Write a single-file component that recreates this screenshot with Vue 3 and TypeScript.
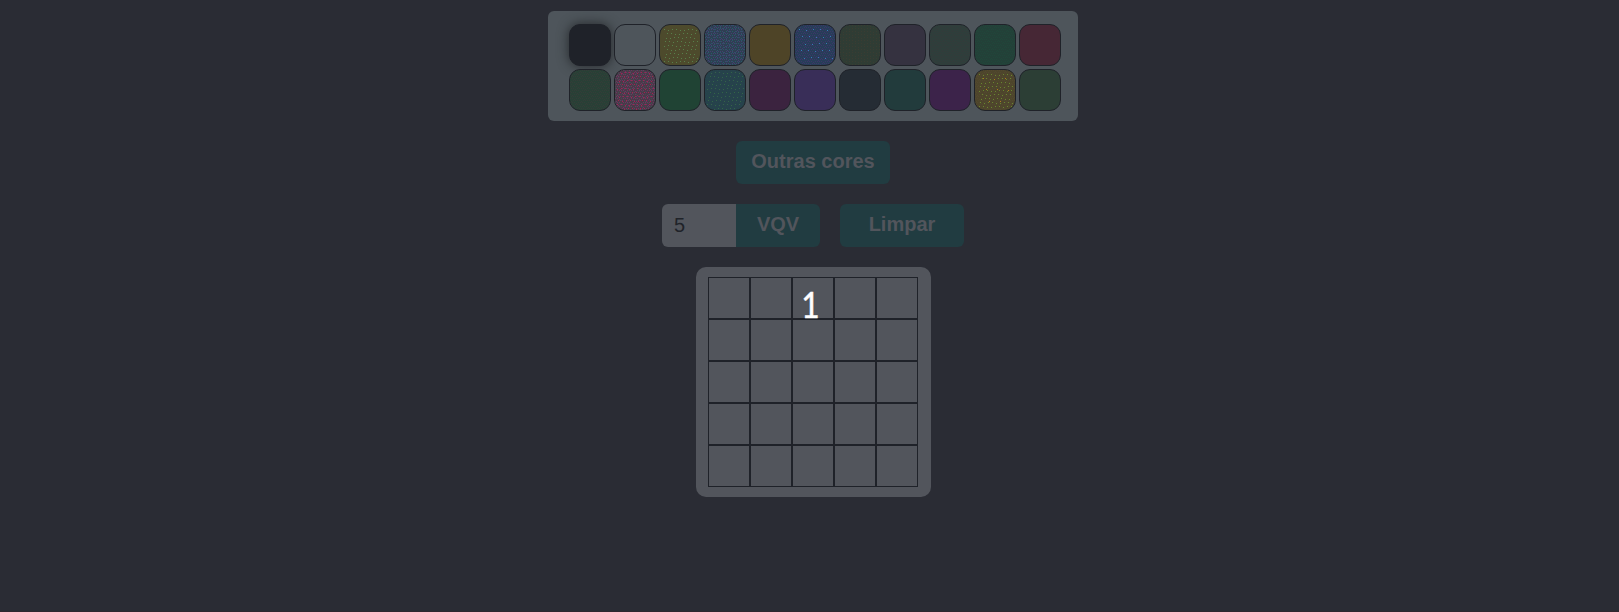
<script setup lang="ts">
import { ref } from 'vue'

interface Grain {
  color: string
  // average distance between grains
  step: number
  // empty margin inside the swatch
  inset: number
}

interface Swatch {
  color: string
  grains?: Grain[]
}

const fine = (color: string, step = 2): Grain => ({ color, step, inset: 0 })
const dots = (color: string, step = 4, inset = 4): Grain => ({ color, step, inset })

const swatches: Swatch[] = [
  { color: '#1f2229' },
  { color: '#4e555b' },
  { color: '#4d4a2c', grains: [dots('#57804a')] },
  { color: '#2d4052', grains: [fine('#444070'), fine('#285a68', 3)] },
  { color: '#4e4427' },
  { color: '#263e58', grains: [fine('#3d3568'), dots('#367ab8', 7)] },
  { color: '#2f3c34', grains: [fine('#3a3c32', 3)] },
  { color: '#353240' },
  { color: '#2e3e3b', grains: [fine('#343a3a')] },
  { color: '#234038', grains: [fine('#20463a')] },
  { color: '#462735' },
  { color: '#284036', grains: [fine('#343c38')] },
  { color: '#4b3948', grains: [fine('#6a3862'), fine('#3d4e52', 3), dots('#a81f50', 4, 2)] },
  { color: '#204334' },
  { color: '#25434a', grains: [fine('#29404f'), dots('#336448', 4, 2)] },
  { color: '#3b233f' },
  { color: '#392e58' },
  { color: '#252c34' },
  { color: '#223b3c' },
  { color: '#3c234a' },
  { color: '#4d452b', grains: [fine('#52482f'), dots('#67862f'), dots('#b07a1c', 11, 8)] },
  { color: '#2c3e35' },
]

// One-pixel squares on a skewed lattice, as in an ordered dither
function grainPath({ step, inset }: Grain): string {
  let d = ''
  let row = 0
  for (let y = inset; y < 40 - inset / 2; y += step, row++) {
    let col = 0
    for (let x = inset + ((row * 3) % step); x < 40 - inset / 2; x += step, col++) {
      const jitter = step > 3 ? (col * 5 + row * 3) % 7 > 3 ? 1 : 0 : (col * 3 + row) % 5 === 0 ? 1 : 0
      d += `M${x} ${Math.min(39, y + jitter)}h1v1h-1z`
    }
  }
  return d
}

const size = ref(5)
const selected = ref(0)
</script>

<template>
  <main class="page">
    <section class="palette">
      <button
        v-for="(s, i) in swatches"
        :key="i"
        class="swatch"
        :class="{ selected: selected === i }"
        :style="{ backgroundColor: s.color }"
        @click="selected = i"
      >
        <svg v-if="s.grains" class="grain" viewBox="0 0 40 40" shape-rendering="crispEdges">
          <path v-for="(g, k) in s.grains" :key="k" :d="grainPath(g)" :fill="g.color" />
        </svg>
      </button>
    </section>
    <button class="btn more">Outras cores</button>
    <div class="controls">
      <input v-model="size" class="size" type="text" />
      <button class="btn apply">VQV</button>
      <button class="btn clear">Limpar</button>
    </div>
    <section class="board">
      <div class="grid">
        <div v-for="n in 25" :key="n" class="cell"></div>
      </div>
      <span class="count">1</span>
    </section>
  </main>
</template>

<style>
body {
  background: #2a2c34;
}
</style>

<style scoped>
.page {
  box-sizing: border-box;
  width: 1619px;
  height: 612px;
  padding-top: 11px;
  display: flex;
  flex-direction: column;
  align-items: center;
  background: #2a2c34;
  border-bottom: 1px solid #30272f;
  padding-left: 7px;
  overflow: hidden;
  font-family: 'Liberation Sans', Arial, sans-serif;
}
.palette {
  box-sizing: border-box;
  width: 530px;
  height: 110px;
  padding: 13px 17px 10px 21px;
  display: grid;
  grid-template-columns: repeat(11, 42px);
  grid-auto-rows: 42px;
  gap: 3px;
  border-radius: 6px;
  background: #4e555b;
}
.swatch {
  box-sizing: border-box;
  padding: 0;
  border: 1px solid #1f2229;
  border-radius: 11px;
  overflow: hidden;
}
.grain {
  display: block;
  width: 40px;
  height: 40px;
}
.selected {
  box-shadow: 0 0 12px #24272a;
}
.btn {
  height: 43px;
  padding: 0 0 2px;
  border: 0;
  border-radius: 6px;
  background: #213c41;
  color: #52555c;
  font: bold 20px 'Liberation Sans', Arial, sans-serif;
}
.more {
  width: 154px;
  margin-top: 20px;
}
.controls {
  display: flex;
  width: 302px;
  margin: 20px 0;
}
.size {
  box-sizing: border-box;
  width: 74px;
  height: 43px;
  padding: 0 12px;
  border: 0;
  border-radius: 6px 0 0 6px;
  background: #52555c;
  color: #202329;
  font: 20px 'Liberation Sans', Arial, sans-serif;
  outline: 0;
}
.apply {
  width: 84px;
  border-radius: 0 6px 6px 0;
}
.clear {
  width: 124px;
  margin-left: 20px;
}
.board {
  position: relative;
  box-sizing: border-box;
  width: 235px;
  height: 230px;
  padding: 10px 12px;
  border-radius: 10px;
  background: #52555c;
}
.grid {
  display: grid;
  grid-template-columns: repeat(5, 42px);
  grid-auto-rows: 42px;
}
.cell {
  border: 1px solid #1f2229;
}
.count {
  position: absolute;
  left: 104px;
  top: 15px;
  color: #fff;
  font: 36px/44px Lato, sans-serif;
  -webkit-text-stroke: 0.5px #fff;
  transform: scaleX(0.88);
}
</style>
